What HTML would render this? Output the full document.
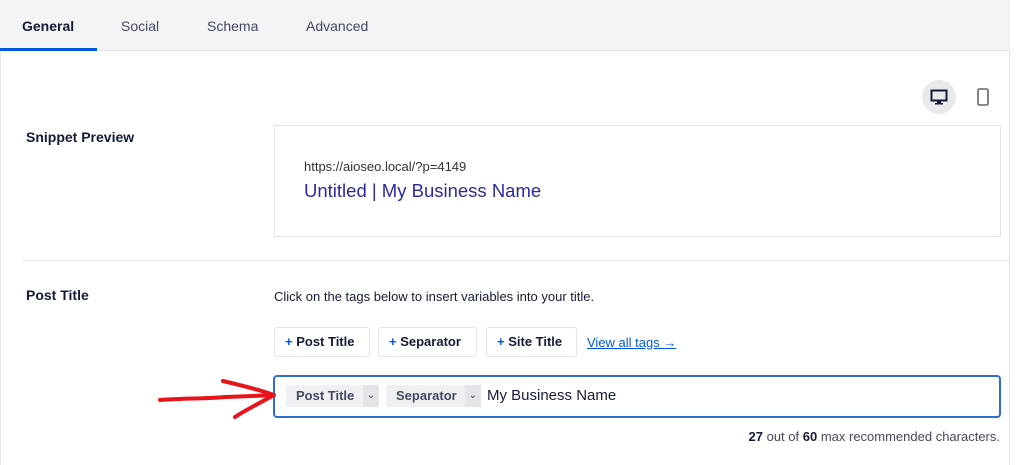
<!DOCTYPE html>
<html><head><style>
*{box-sizing:border-box;margin:0;padding:0}
body{width:1024px;height:465px;background:#fff;font-family:"Liberation Sans",sans-serif;position:relative;overflow:hidden;color:#141b38}
.abs{position:absolute}
.tabs{left:0;top:0;width:1010px;height:51px;background:#f3f4f5;border-bottom:1px solid #e2e4e7}
.tab{top:18px;font-size:14px;color:#434960}
.frame{left:0;top:51px;width:1010px;height:414px;border-right:1px solid #e2e4e7;border-left:1px solid #e8e8e8}
.lbl{font-size:14px;font-weight:bold;color:#141b38}
.btn{top:327px;height:30px;border:1px solid #e2e4e7;border-radius:3px;font-size:13px;font-weight:bold;line-height:28px;padding:0 12px 0 10px;color:#141b38}
.btn b{color:#005ae0;font-weight:bold}
.tag{top:385px;height:22px;background:#eef0f2;font-size:13px;font-weight:bold;line-height:22px;color:#434960;padding-left:10px}
.tag span{position:absolute;right:0;top:0;width:16px;height:22px;background:#e2e4e7;text-align:center;font-size:10px;font-weight:normal}
</style></head><body>
<div class="abs tabs"></div>
<div class="abs tab" style="left:22px;font-weight:bold;color:#141b38">General</div>
<div class="abs" style="left:0;top:48px;width:97px;height:3px;background:#005ae0"></div>
<div class="abs tab" style="left:121px">Social</div>
<div class="abs tab" style="left:207px">Schema</div>
<div class="abs tab" style="left:306px">Advanced</div>
<div class="abs frame"></div>

<div class="abs" style="left:922px;top:80px;width:34px;height:34px;border-radius:50%;background:#e8e9eb"></div>
<svg class="abs" style="left:930px;top:89px" width="18" height="16" viewBox="0 0 18 16"><rect x="1.5" y="1.5" width="15" height="10" fill="none" stroke="#141b38" stroke-width="2"/><rect x="7" y="12" width="4" height="2" fill="#141b38"/><rect x="5" y="14" width="8" height="1.5" fill="#141b38"/></svg>
<svg class="abs" style="left:977px;top:88px" width="12" height="18" viewBox="0 0 12 18"><rect x="1" y="1" width="10" height="16" rx="1.5" fill="none" stroke="#666" stroke-width="1.6"/></svg>

<div class="abs lbl" style="left:26px;top:129px">Snippet Preview</div>
<div class="abs" style="left:274px;top:125px;width:727px;height:112px;border:1px solid #e2e4e7"></div>
<div class="abs" style="left:304px;top:159px;font-size:13px;color:#333">https://aioseo.local/?p=4149</div>
<div class="abs" style="left:304px;top:180px;font-size:18.5px;color:#2a2aa0">Untitled | My Business Name</div>

<div class="abs" style="left:22px;top:260px;width:987px;height:1px;background:#eceef0"></div>

<div class="abs lbl" style="left:26px;top:287px">Post Title</div>
<div class="abs" style="left:274px;top:289px;font-size:13px;color:#141b38">Click on the tags below to insert variables into your title.</div>
<div class="abs btn" style="left:274px;width:96px"><b>+</b> Post Title</div>
<div class="abs btn" style="left:378px;width:99px"><b>+</b> Separator</div>
<div class="abs btn" style="left:486px;width:91px"><b>+</b> Site Title</div>
<div class="abs" style="left:587px;top:335px;font-size:13px;color:#005ae0;text-decoration:underline">View all tags →</div>

<div class="abs" style="left:273px;top:375px;width:728px;height:43px;border:2px solid #2c6ecb;border-radius:4px"></div>
<div class="abs tag" style="left:286px;width:93px">Post Title<span>⌄</span></div>
<div class="abs tag" style="left:386px;width:95px">Separator<span>⌄</span></div>
<div class="abs" style="left:487px;top:387px;font-size:15px;color:#141b38">My Business Name</div>

<svg class="abs" style="left:155px;top:375px" width="125" height="48" viewBox="0 0 125 48"><path d="M5 25 C30 23 50 24 70 22 C90 21 105 21 118 20" stroke="#e8141c" stroke-width="4" fill="none" stroke-linecap="round"/><path d="M68 6 C85 10 105 15 119 20 C105 28 92 34 80 42" stroke="#e8141c" stroke-width="4" fill="none" stroke-linecap="round" stroke-linejoin="round"/></svg>

<div class="abs" style="right:24px;top:429px;font-size:13px;color:#434960"><b style="color:#141b38">27</b> out of <b style="color:#141b38">60</b> max recommended characters.</div>
</body></html>
